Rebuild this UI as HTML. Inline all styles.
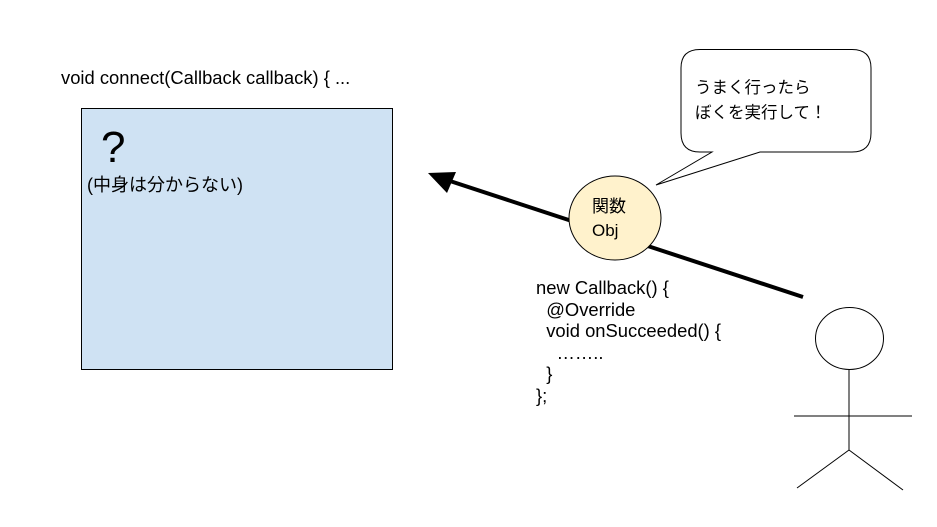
<!DOCTYPE html>
<html><head><meta charset="utf-8"><style>
body{margin:0;width:937px;height:527px;background:#fff;position:relative;overflow:hidden;font-family:"Liberation Sans","Noto Sans CJK JP",sans-serif;color:#000}
.t{position:absolute;font-size:16px;white-space:pre;line-height:21.5px}
</style></head><body>
<svg width="937" height="527" style="position:absolute;left:0;top:0">
<rect x="81.5" y="108.5" width="311" height="261" fill="#cfe2f3" stroke="#000" stroke-width="1"/>
<path d="M700 49.5 H852 Q871 49.5 871 68 V133 Q871 152 852 152 H760 L656 185 L712 152 H700 Q681 152 681 133 V68 Q681 49.5 700 49.5 Z" fill="#fff" stroke="#000" stroke-width="1"/>
<line x1="803" y1="297" x2="450" y2="181" stroke="#000" stroke-width="4"/>
<polygon points="428,173 456,172 447,193" fill="#000"/>
<ellipse cx="615" cy="218" rx="46" ry="42" fill="#fff2cc" stroke="#000" stroke-width="1"/>
<ellipse cx="849.5" cy="338.5" rx="34" ry="31" fill="#fff" stroke="#000" stroke-width="1"/>
<line x1="849" y1="369" x2="849" y2="450" stroke="#000"/>
<line x1="794" y1="416" x2="912" y2="416" stroke="#000"/>
<line x1="849" y1="450" x2="797" y2="488" stroke="#000"/>
<line x1="849" y1="450" x2="903" y2="490" stroke="#000"/>
</svg>
<div class="t" style="left:61px;top:67px;font-size:18.4px">void connect(Callback callback) { ...</div>
<div class="t" style="left:101px;top:124px;font-size:44px;line-height:48px">?</div>
<div class="t" style="left:87px;top:175px;font-size:18px">(中身は分からない)</div>
<div class="t" style="left:695px;top:76px;font-size:16.5px;line-height:25px">うまく行ったら
ぼくを実行して！</div>
<div class="t" style="left:592px;top:195px;line-height:24px;font-size:17px">関数
Obj</div>
<div class="t" style="left:536px;top:277px;font-size:18.4px;line-height:21.6px">new Callback() {
  @Override
  void onSucceeded() {
    ……..
  }
};</div>
</body></html>
